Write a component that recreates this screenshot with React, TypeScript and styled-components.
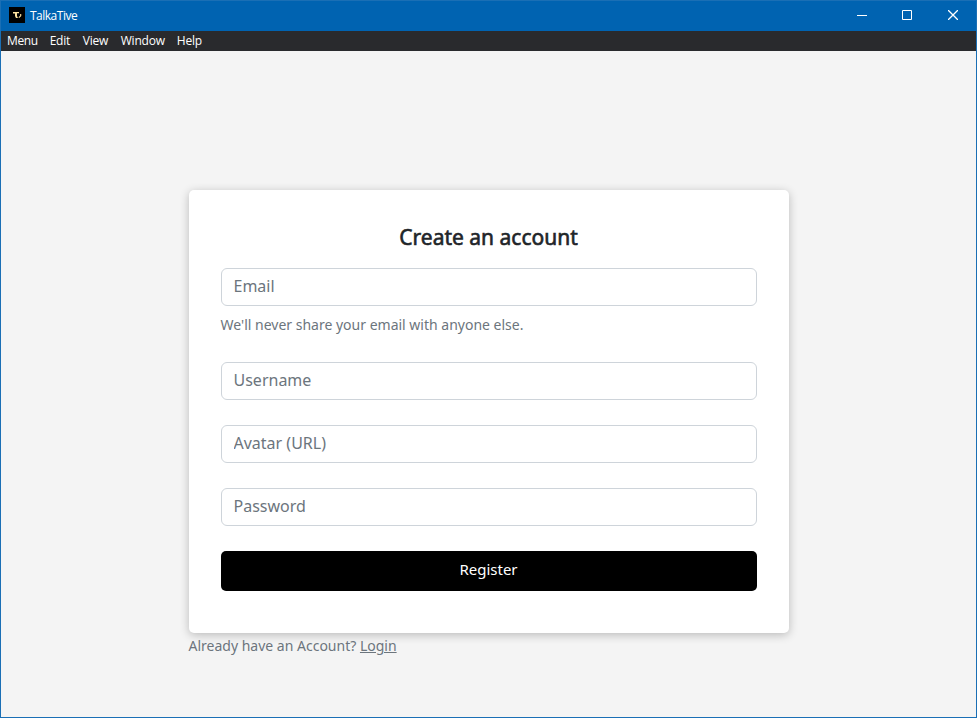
import React from "react";
import styled, { createGlobalStyle } from "styled-components";

const GlobalStyle = createGlobalStyle`
  * { box-sizing: border-box; }
  body { margin: 0; font-family: "Noto Sans", sans-serif; }
`;

const Window = styled.div`
  height: 718px;
  display: flex;
  flex-direction: column;
  border: 1px solid #1a6fb5;
  background: #f4f4f4;
`;

const TitleBar = styled.header`
  height: 30px;
  flex: none;
  display: flex;
  align-items: center;
  padding-left: 8px;
  background: #0063b1;
  color: #fff;
`;

const Logo = styled.svg`
  display: block;
  margin-bottom: 2px;
`;

const AppTitle = styled.span`
  flex: 1;
  margin-left: 5px;
  font: 12px/16px "Open Sans", sans-serif;
  letter-spacing: -0.5px;
`;

const WindowButton = styled.button<{ $inset?: number }>`
  width: 46px;
  height: 30px;
  padding: 0 0 2px ${(p) => p.$inset ?? 0}px;
  border: 0;
  background: none;
  color: #fff;
  display: grid;
  place-items: center;
`;

const MenuBar = styled.nav`
  height: 20px;
  flex: none;
  display: flex;
  background: #292a2d;
`;

const MenuItem = styled.span`
  padding: 0 6px;
  font: 12px/20px "Open Sans", sans-serif;
  letter-spacing: -0.2px;
  color: #fff;

  &:first-child { letter-spacing: -0.4px; }
  &:nth-child(2) { margin-right: 0.6px; }
  &:nth-child(3) { margin-right: 0.5px; }
`;

const Page = styled.main`
  flex: 1;
  padding-top: 139px;
`;

const Content = styled.div`
  width: 600px;
  margin: 0 auto;
`;

const Card = styled.form`
  height: 443px;
  padding: 32px;
  border-radius: 5px;
  background: #fff;
  box-shadow: 0 2px 10px rgba(0, 0, 0, 0.24);
`;

const Heading = styled.h1`
  margin: 0 0 16px;
  font-size: 21px;
  line-height: 30px;
  font-weight: 400;
  -webkit-text-stroke: 0.6px #212529;
  text-align: center;
  color: #212529;
`;

const Input = styled.input<{ $gap: number }>`
  display: block;
  width: 100%;
  height: 38px;
  margin-bottom: ${(p) => p.$gap}px;
  padding: 5px 12px 7px;
  border: 1px solid #ced4da;
  border-radius: 6px;
  font: 16px/24px "Noto Sans", sans-serif;
  &::placeholder { color: #6c757d; opacity: 1; }
`;

const Hint = styled.p`
  margin: 0 0 26px;
  font-size: 14px;
  line-height: 22px;
  color: #6c757d;
`;

const Submit = styled.button`
  display: block;
  width: 100%;
  height: 40px;
  padding: 0 0 4px;
  border: 0;
  border-radius: 5px;
  background: #000;
  color: #fff;
  font: 15px/24px "Noto Sans", sans-serif;
`;

const Footer = styled.p`
  margin: 2px 0 0;
  font-size: 14px;
  line-height: 22px;
  color: #6c757d;
`;

const Link = styled.a`
  color: #6c757d;
  text-decoration: underline;
`;

export default function App() {
  return (
    <Window>
      <GlobalStyle />
      <TitleBar>
        <Logo width="16" height="16" viewBox="0 0 16 16">
          <rect width="16" height="16" fill="#000" />
          <path d="M4 5h6v1.3H8V9l1 2H7L6 9V6.5H4z" fill="#ffe3a0" />
          <path d="M11.7 7v1.8L9.8 10.6" fill="none" stroke="#ffe3a0" strokeWidth="1.1" />
        </Logo>
        <AppTitle>TalkaTive</AppTitle>
        <WindowButton aria-label="Minimize" $inset={2}>
          <svg width="10" height="10"><path d="M0 5.5h10" stroke="currentColor" /></svg>
        </WindowButton>
        <WindowButton aria-label="Maximize">
          <svg width="10" height="10"><path d="M.5 .5h9v9h-9z" fill="none" stroke="currentColor" /></svg>
        </WindowButton>
        <WindowButton aria-label="Close">
          <svg width="10" height="10"><path d="M0 0l10 10M10 0l-10 10" stroke="currentColor" strokeWidth="1.3" /></svg>
        </WindowButton>
      </TitleBar>
      <MenuBar>
        {["Menu", "Edit", "View", "Window", "Help"].map((m) => <MenuItem key={m}>{m}</MenuItem>)}
      </MenuBar>
      <Page>
        <Content>
          <Card>
            <Heading>Create an account</Heading>
            <Input $gap={8} placeholder="Email" />
            <Hint>We'll never share your email with anyone else.</Hint>
            <Input $gap={25} placeholder="Username" />
            <Input $gap={25} placeholder="Avatar (URL)" />
            <Input $gap={25} type="password" placeholder="Password" />
            <Submit type="button">Register</Submit>
          </Card>
          <Footer>Already have an Account? <Link>Login</Link></Footer>
        </Content>
      </Page>
    </Window>
  );
}
